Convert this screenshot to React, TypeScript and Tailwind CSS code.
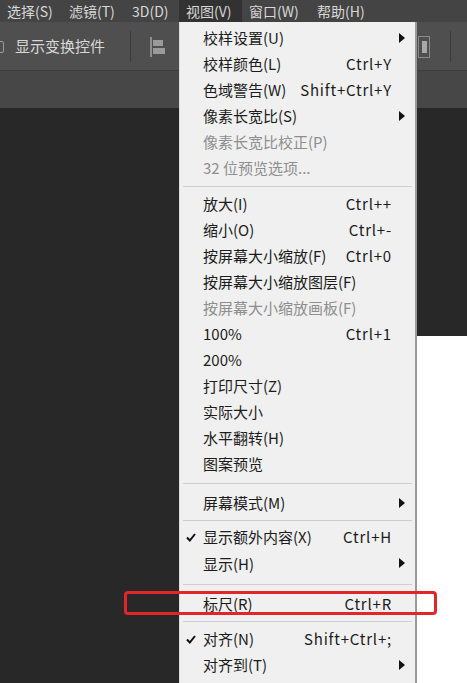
import { Fragment } from 'react';

type Item =
  | { sep: true; h?: string }
  | { sep?: false; label: string; keys?: string; arrow?: boolean; disabled?: boolean; checked?: boolean };

const menuBar = [
  { label: '选择(S)', w: 'w-[62px]' },
  { label: '滤镜(T)', w: 'w-[63px]' },
  { label: '3D(D)', w: 'w-[54px]' },
  { label: '视图(V)', w: 'w-[63px]', active: true },
  { label: '窗口(W)', w: 'w-[68px]' },
  { label: '帮助(H)', w: 'w-[66px]' },
];

const items: Item[] = [
  { label: '校样设置(U)', arrow: true },
  { label: '校样颜色(L)', keys: 'Ctrl+Y' },
  { label: '色域警告(W)', keys: 'Shift+Ctrl+Y' },
  { label: '像素长宽比(S)', arrow: true },
  { label: '像素长宽比校正(P)', disabled: true },
  { label: '32 位预览选项...', disabled: true },
  { sep: true, h: 'h-[10px]' },
  { label: '放大(I)', keys: 'Ctrl++' },
  { label: '缩小(O)', keys: 'Ctrl+-' },
  { label: '按屏幕大小缩放(F)', keys: 'Ctrl+0' },
  { label: '按屏幕大小缩放图层(F)' },
  { label: '按屏幕大小缩放画板(F)', disabled: true },
  { label: '100%', keys: 'Ctrl+1' },
  { label: '200%' },
  { label: '打印尺寸(Z)' },
  { label: '实际大小' },
  { label: '水平翻转(H)' },
  { label: '图案预览' },
  { sep: true, h: 'h-[13px]' },
  { label: '屏幕模式(M)', arrow: true },
  { sep: true, h: 'h-[8px]' },
  { label: '显示额外内容(X)', keys: 'Ctrl+H', checked: true },
  { label: '显示(H)', arrow: true, h: 'h-[28px]' } as Item,
  { sep: true, h: 'h-[13px]' },
  { label: '标尺(R)', keys: 'Ctrl+R' },
  { sep: true, h: 'h-[9px]' },
  { label: '对齐(N)', keys: 'Shift+Ctrl+;', checked: true },
  { label: '对齐到(T)', arrow: true },
  { sep: true, h: 'h-[12px]' },
];

function Arrow() {
  return (
    <svg width="6" height="10" viewBox="0 0 6 10" className="absolute right-[10px] top-[8px]">
      <path d="M0 0 L6 5 L0 10 Z" fill="#111" />
    </svg>
  );
}

function Check() {
  return (
    <svg width="10" height="9" viewBox="0 0 10 9" className="absolute left-[6px] top-[9px]">
      <path d="M1 4.5 L3.8 7.5 L9 1" stroke="#111" strokeWidth="2" fill="none" />
    </svg>
  );
}

export default function App() {
  return (
    <div className="w-[467px] h-[683px] overflow-hidden relative flex flex-col bg-[#282828] font-['Noto_Sans_CJK_SC','Noto_Sans',sans-serif]">
      {/* menu bar */}
      <div className="h-[22px] bg-[#444444] flex text-[14px] text-[#d8d8d8] shrink-0">
        {menuBar.map(m => (
          <div key={m.label} className={`${m.w} h-full flex items-center pl-[7px] ${m.active ? 'bg-[#323232]' : ''}`}>
            {m.label}
          </div>
        ))}
      </div>

      {/* options bar */}
      <div className="h-[48px] bg-[#4f4f4f] flex items-center shrink-0 text-[15px] text-[#d8d8d8]">
        <div className="w-[12px] h-[12px] border border-[#9a9a9a] rounded-[2px] ml-[-8px] mt-[2px]" />
        <span className="ml-[11px]">显示变换控件</span>
        <div className="w-px h-[31px] bg-[#3a3a3a] ml-[25px]" />
        <div className="ml-[19px] flex items-center h-[20px] mt-[2px]">
          <div className="w-[2px] h-[20px] bg-[#8f8f8f]" />
          <div className="flex flex-col gap-[2px] ml-[1px]">
            <div className="w-[10px] h-[6px] bg-[#9a9a9a]" />
            <div className="w-[12px] h-[6px] bg-[#9a9a9a]" />
          </div>
        </div>
        <div className="ml-auto flex items-center h-full">
          <div className="w-[12px] h-[22px] border border-[#8a8a8a] flex items-center justify-center mt-[2px]">
            <div className="w-[5px] h-[12px] bg-[#a8a8a8]" />
          </div>
          <div className="w-px h-[31px] bg-[#3a3a3a] ml-[20px] mr-[16px]" />
        </div>
      </div>

      {/* tab band */}
      <div className="h-[38px] bg-[#474747] border-t border-[#3c3c3c] shrink-0" />

      {/* canvas */}
      <div className="flex-1 flex justify-end">
        <div className="w-[140px] mt-[228px] bg-white" />
      </div>

      {/* view menu */}
      <div className="absolute left-[179px] top-[22px] w-[238px] h-[700px] bg-[#f0f0f0] border-l border-[#dcdcdc] border-r-2 border-r-[#9b9b9b] pt-[3px] text-[15px] text-[#1c1c1c]">
        {items.map((it, i) =>
          it.sep ? (
            <div key={i} className={`${it.h} flex items-center px-[3px]`}>
              <div className="h-px w-full bg-[#cdcdcd]" />
            </div>
          ) : (
            <Fragment key={i}>
              <div className={`relative ${(it as { h?: string }).h ?? 'h-[26px]'} flex items-center justify-between pl-[23px] pr-[23px] ${it.disabled ? 'text-[#8e8e8e]' : ''}`}>
                {it.checked && <Check />}
                <span>{it.label}</span>
                {it.keys && <span className="tracking-[0.8px]">{it.keys}</span>}
                {it.arrow && <Arrow />}
              </div>
            </Fragment>
          )
        )}
      </div>

      {/* highlight box */}
      <div className="absolute left-[124px] top-[591px] w-[313px] h-[24px] border-[3px] border-[#e3242b] rounded-[4px]" />
    </div>
  );
}
